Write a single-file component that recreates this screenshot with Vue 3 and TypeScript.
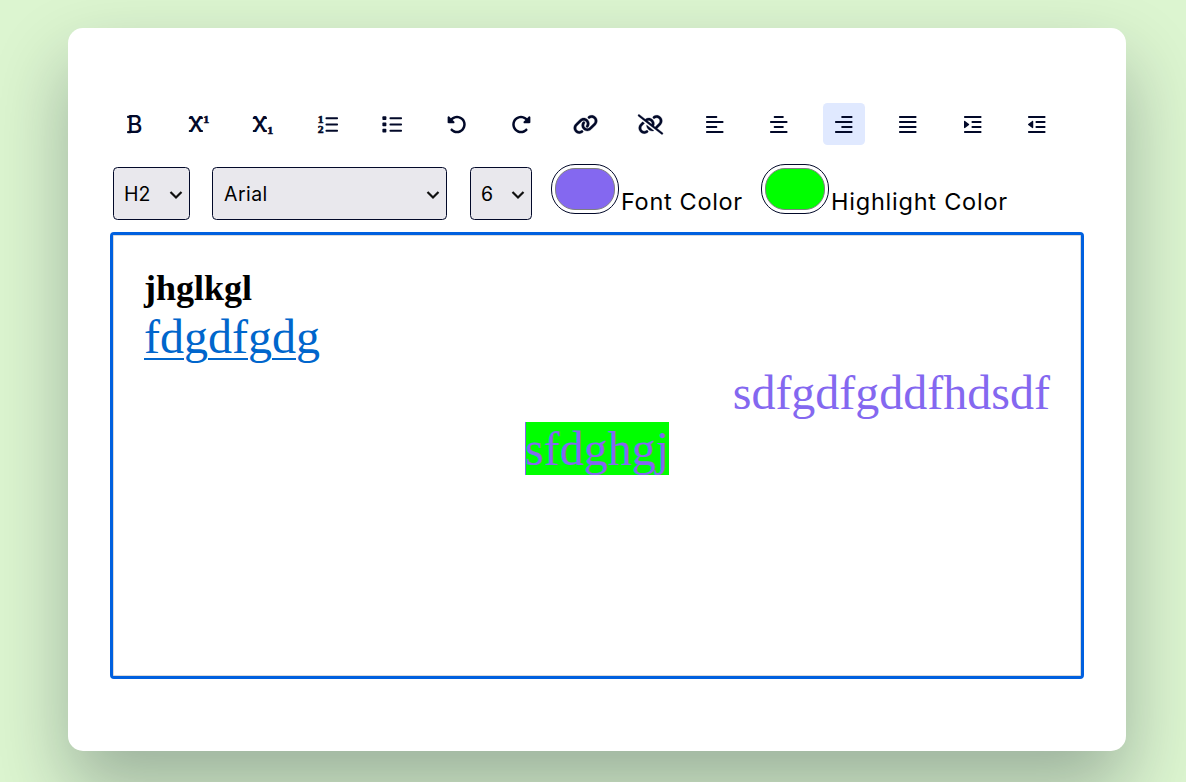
<script setup lang="ts">
import { ref } from 'vue'

interface Tool {
  name: string
  box: string
  width: number
}

const tools: Tool[] = [
  { name: 'bold', box: '0 0 384 512', width: 15 },
  { name: 'superscript', box: '0 0 512 512', width: 20 },
  { name: 'subscript', box: '0 0 512 512', width: 20 },
  { name: 'ordered', box: '0 0 512 512', width: 20 },
  { name: 'unordered', box: '0 0 512 512', width: 20 },
  { name: 'undo', box: '0 0 512 512', width: 20 },
  { name: 'redo', box: '0 0 512 512', width: 20 },
  { name: 'link', box: '0 0 640 512', width: 25 },
  { name: 'unlink', box: '0 0 640 512', width: 25 },
  { name: 'left', box: '0 0 448 512', width: 17.5 },
  { name: 'center', box: '0 0 448 512', width: 17.5 },
  { name: 'right', box: '0 0 448 512', width: 17.5 },
  { name: 'justify', box: '0 0 448 512', width: 17.5 },
  { name: 'indent', box: '0 0 448 512', width: 17.5 },
  { name: 'outdent', box: '0 0 448 512', width: 17.5 },
]

// Each bar is [x, y, width]
const bars: Record<string, number[][]> = {
  ordered: [[192, 64, 320], [192, 224, 320], [192, 384, 320]],
  unordered: [[192, 64, 320], [192, 224, 320], [192, 384, 320]],
  left: [[0, 32, 288], [0, 160, 448], [0, 288, 288], [0, 416, 448]],
  center: [[96, 32, 256], [0, 160, 448], [96, 288, 256], [0, 416, 448]],
  right: [[160, 32, 288], [0, 160, 448], [160, 288, 288], [0, 416, 448]],
  justify: [[0, 32, 448], [0, 160, 448], [0, 288, 448], [0, 416, 448]],
  indent: [[0, 32, 448], [192, 160, 256], [192, 288, 256], [0, 416, 448]],
  outdent: [[0, 32, 448], [192, 160, 256], [192, 288, 256], [0, 416, 448]],
}

const active = ref('right')
const heading = ref('H2')
const font = ref('Arial')
const size = ref('6')
const fontColor = ref('#8468f0')
const highlight = ref('#00ff00')
</script>

<template>
  <div class="page">
    <main class="card">
      <div class="tools">
        <button
          v-for="t in tools"
          :key="t.name"
          class="tool"
          :class="{ active: active === t.name }"
          :aria-label="t.name"
          @click="active = t.name"
        >
          <svg :viewBox="t.box" :width="t.width" height="20">
            <g transform="translate(0 12)">
              <rect
                v-for="(b, i) in bars[t.name] || []"
                :key="i"
                :x="b[0]"
                :y="b[1] + 7"
                :width="b[2]"
                height="54"
                rx="20"
              />
              <template v-if="t.name === 'bold'">
                <text class="glyph-b" x="4" y="478" textLength="388" lengthAdjust="spacingAndGlyphs">B</text>
                <rect x="0" y="32" width="110" height="56" rx="24" />
                <rect x="0" y="422" width="110" height="56" rx="24" />
              </template>
              <template v-else-if="t.name === 'superscript' || t.name === 'subscript'">
                <text class="glyph-x" x="0" y="446" textLength="352" lengthAdjust="spacingAndGlyphs">X</text>
                <rect x="-6" y="66" width="76" height="50" rx="22" />
                <rect x="282" y="66" width="76" height="50" rx="22" />
                <rect x="-6" y="398" width="76" height="50" rx="22" />
                <rect x="282" y="398" width="76" height="50" rx="22" />
                <text
                  class="glyph-1"
                  x="366"
                  :y="t.name === 'superscript' ? 214 : 504"
                  textLength="154"
                  lengthAdjust="spacingAndGlyphs"
                >1</text>
              </template>
              <template v-else-if="t.name === 'ordered'">
                <text class="glyph-1" x="-4" y="214" textLength="150" lengthAdjust="spacingAndGlyphs">1</text>
                <text class="glyph-1" x="-4" y="476" textLength="150" lengthAdjust="spacingAndGlyphs">2</text>
              </template>
              <template v-else-if="t.name === 'unordered'">
                <rect v-for="y in [48, 208, 368]" :key="y" x="10" :y="y" width="102" height="96" rx="20" />
              </template>
              <path
                v-else-if="t.name === 'undo' || t.name === 'redo'"
                :transform="t.name === 'redo' ? 'translate(512 0) scale(-1 1)' : undefined"
                d="M48.500 224H40c-13.300 0-24-10.700-24-24V72c0-9.700 5.800-18.500 14.800-22.200s19.300-1.700 26.200 5.200L98.600 96.600c87.600-86.500 228.700-86.200 315.800 1c87.500 87.500 87.500 229.300 0 316.800s-229.300 87.500-316.800 0c-12.500-12.500-12.500-32.800 0-45.300s32.800-12.500 45.300 0c62.500 62.500 163.800 62.500 226.300 0s62.500-163.800 0-226.300c-62.200-62.200-162.700-62.500-225.300-1L185 183c6.900 6.900 8.900 17.200 5.200 26.200s-12.500 14.800-22.200 14.800H48.500z"
              />
              <path
                v-else-if="t.name === 'link'"
                class="heavy"
                d="M579.8 267.7c56.5-56.5 56.5-148 0-204.5c-50-50-128.8-56.5-186.3-15.4l-1.6 1.1c-14.4 10.3-17.7 30.3-7.4 44.6s30.3 17.7 44.6 7.4l1.6-1.1c32.1-22.9 76-19.3 103.8 8.6c31.5 31.5 31.5 82.500 0 114L422.300 334.800c-31.500 31.500-82.500 31.500-114 0c-27.900-27.900-31.500-71.800-8.600-103.800l1.100-1.600c10.300-14.400 6.900-34.400-7.400-44.600s-34.400-6.900-44.600 7.400l-1.100 1.600C206.500 251.200 213 330 263 380c56.500 56.500 148 56.500 204.500 0L579.800 267.700zM60.200 244.300c-56.500 56.500-56.500 148 0 204.500c50 50 128.800 56.500 186.300 15.400l1.600-1.100c14.400-10.300 17.700-30.300 7.400-44.600s-30.300-17.700-44.600-7.400l-1.600 1.100c-32.100 22.900-76 19.300-103.800-8.600C74 372 74 321 105.500 289.500L217.700 177.200c31.500-31.500 82.500-31.500 114 0c27.900 27.900 31.500 71.800 8.600 103.900l-1.100 1.600c-10.300 14.400-6.900 34.400 7.400 44.600s34.400 6.900 44.600-7.400l1.100-1.600C433.500 260.800 427 182 377 132c-56.500-56.500-148-56.500-204.500 0L60.200 244.300z"
              />
              <path
                v-else-if="t.name === 'unlink'"
                class="heavy"
                d="M38.8 5.1C28.4-3.1 13.3-1.2 5.1 9.2S-1.2 34.7 9.2 42.9l592 464c10.4 8.2 25.5 6.3 33.7-4.1s6.3-25.5-4.1-33.7L489.3 358.2l90.5-90.5c56.5-56.5 56.5-148 0-204.5c-50-50-128.8-56.5-186.3-15.4l-1.6 1.1c-14.4 10.3-17.7 30.3-7.4 44.6s30.3 17.7 44.6 7.4l1.6-1.1c32.1-22.9 76-19.3 103.8 8.6c31.5 31.5 31.5 82.500 0 114l-96 96-31.900-25C430.900 239.600 420.100 175.100 377 132c-52.200-52.300-134.500-56.200-191.300-11.700L38.800 5.100zM239 162c30.100-14.900 67.700-9.900 92.800 15.300c20 20 27.500 48.300 21.700 74.500L239 162zM406.600 416.400L220.900 270c-2.100 39.800 12.200 80.100 42.200 110c38.900 38.900 94.400 51 143.600 36.300zm-290-228.500L60.200 244.300c-56.500 56.500-56.500 148 0 204.500c50 50 128.800 56.500 186.300 15.400l1.600-1.100c14.400-10.300 17.700-30.300 7.400-44.600s-30.300-17.700-44.600-7.400l-1.600 1.100c-32.100 22.900-76 19.300-103.800-8.600C74 372 74 321 105.500 289.500l61.800-61.800-50.600-39.900z"
              />
              <path
                v-else-if="t.name === 'indent' || t.name === 'outdent'"
                :transform="t.name === 'outdent' ? 'translate(134 0) scale(-1 1)' : undefined"
                d="M127.800 268.600L25.800 347.900C15.300 356.100 0 348.600 0 335.300V176.700c0-13.300 15.300-20.800 25.800-12.600l101.900 79.300c8.200 6.400 8.200 18.800 0 25.200z"
              />
            </g>
          </svg>
        </button>
      </div>

      <div class="options">
        <label class="pick heading">
          <select v-model="heading"><option>H1</option><option>H2</option><option>H3</option></select>
          <svg class="chevron" viewBox="0 0 14 10" width="14" height="10"><path d="M1.500 2L7 7.500L12.500 2" /></svg>
        </label>
        <label class="pick font">
          <select v-model="font"><option>Arial</option><option>Verdana</option></select>
          <svg class="chevron" viewBox="0 0 14 10" width="14" height="10"><path d="M1.500 2L7 7.500L12.500 2" /></svg>
        </label>
        <label class="pick size">
          <select v-model="size"><option>5</option><option>6</option><option>7</option></select>
          <svg class="chevron" viewBox="0 0 14 10" width="14" height="10"><path d="M1.500 2L7 7.500L12.500 2" /></svg>
        </label>
        <div class="color">
          <input v-model="fontColor" type="color" aria-label="Font Color" />
          <span class="caption short">Font Color</span>
        </div>
        <div class="color second">
          <input v-model="highlight" type="color" aria-label="Highlight Color" />
          <span class="caption">Highlight Color</span>
        </div>
      </div>

      <div class="editor">
        <h2>jhglkgl</h2>
        <p><a href="#">fdgdfgdg</a></p>
        <p class="end">sdfgdfgddfhdsdf</p>
        <p class="mid"><span class="marked">sfdghgj</span></p>
      </div>
    </main>
  </div>
</template>

<style>
body {
  background: #dcf5d0;
}
</style>

<style scoped>
* {
  box-sizing: border-box;
  margin: 0;
}
.page {
  height: 782px;
  padding: 28px 0 0 68px;
  overflow: hidden;
  background: #dcf5d0;
}
.card {
  width: 1058px;
  height: 723px;
  padding: 75px 45px;
  background: #fff;
  border-radius: 15px;
  box-shadow: 0 37.5px 75px rgba(7, 20, 35, 0.3);
}
.tools {
  display: flex;
  justify-content: space-between;
  width: 945px;
}
.tool {
  display: grid;
  place-items: center;
  width: 42px;
  height: 42px;
  padding: 0;
  border: 0;
  border-radius: 4.5px;
  background: transparent;
}
.tool.active {
  background: #e0e9ff;
}
.tool svg {
  display: block;
  fill: #020929;
  overflow: visible;
}
.heavy {
  stroke: #020929;
  stroke-width: 8px;
}
.glyph-b {
  font: 500 612px Inter, sans-serif;
}
.glyph-x {
  font: 600 530px "Noto Sans", sans-serif;
}
.glyph-1 {
  font: bold 290px "Liberation Serif", serif;
  stroke: #020929;
  stroke-width: 14px;
}
.options {
  display: flex;
  align-items: flex-start;
  height: 56px;
  margin-top: 19px;
}
.pick {
  display: grid;
  align-items: center;
  height: 53px;
  margin: 3px 22px 0 0;
}
.pick.heading { width: 77px; }
.pick.font { width: 235px; margin-right: 23px; }
.pick.size { width: 62px; margin-right: 19px; }
.pick select {
  grid-area: 1 / 1;
  width: 100%;
  height: 53px;
  padding: 0 0 0 10px;
  appearance: none;
  border: 1px solid #020929;
  border-radius: 4.5px;
  background: #e9e8ed;
  color: #000;
  font: 19.500px Inter, sans-serif;
}
.pick.font select {
  padding-left: 11px;
  letter-spacing: 0.45px;
}
.chevron {
  grid-area: 1 / 1;
  justify-self: end;
  margin: 3px 7.5px 0 0;
  fill: none;
  stroke: #101010;
  stroke-width: 2.2;
  pointer-events: none;
}
.color {
  display: flex;
}
.color.second {
  margin-left: 19px;
}
.color input {
  width: 68px;
  height: 50px;
  padding: 3px;
  appearance: none;
  border: 1.500px solid #020929;
  border-radius: 24px;
  background: #fff;
}
.color input::-webkit-color-swatch-wrapper {
  padding: 0;
}
.color input::-webkit-color-swatch {
  border: 1px solid #808080;
  border-radius: 20px;
}
.caption {
  width: 176px;
  margin: 23px 0 0 2px;
  font: 23.500px/30px Inter, sans-serif;
  letter-spacing: 0.77px;
  white-space: nowrap;
}
.caption.short {
  width: 121px;
  letter-spacing: 0.68px;
}
.editor {
  width: 968px;
  height: 441px;
  margin-top: 15px;
  padding: 31px 30px;
  border: 1px solid #dadada;
  outline: 3px solid #0060df;
  border-radius: 1px;
  font: 48px/56px "Liberation Serif", serif;
}
.editor h2 {
  font-size: 36px;
  line-height: 42px;
}
.editor a {
  color: #0066cc;
  text-decoration-thickness: 2px;
  text-underline-offset: 5px;
}
.end,
.mid {
  color: #8468f0;
}
.end {
  text-align: right;
}
.mid {
  text-align: center;
}
.marked {
  background: #00ff00;
  box-shadow: inset 1px 0 #8468f0;
}
</style>
